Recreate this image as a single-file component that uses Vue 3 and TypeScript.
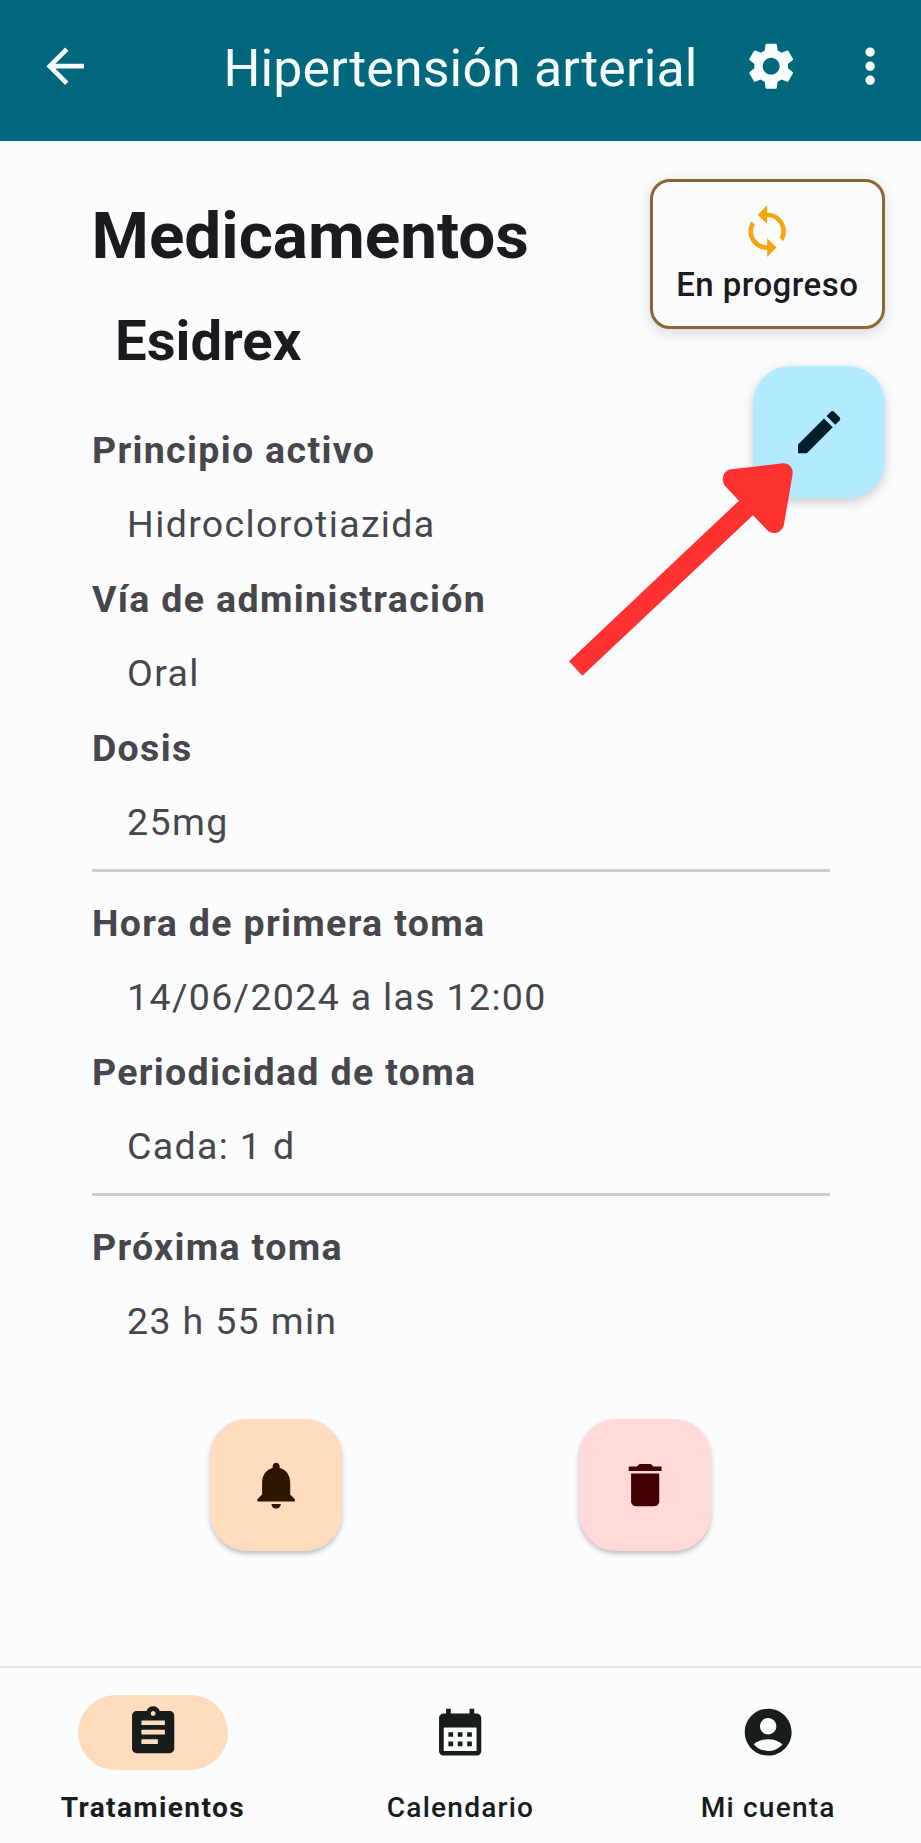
<script setup lang="ts">
interface Field {
  label: string
  value: string
}

interface Tab {
  label: string
  icon: string
  active: boolean
}

const groups: Field[][] = [
  [
    { label: 'Principio activo', value: 'Hidroclorotiazida' },
    { label: 'Vía de administración', value: 'Oral' },
    { label: 'Dosis', value: '25mg' },
  ],
  [
    { label: 'Hora de primera toma', value: '14/06/2024 a las 12:00' },
    { label: 'Periodicidad de toma', value: 'Cada: 1 d' },
  ],
  [{ label: 'Próxima toma', value: '23 h 55 min' }],
]

const icons = {
  back: 'M20 11H7.83l5.59-5.59L12 4l-8 8 8 8 1.41-1.41L7.83 13H20v-2z',
  settings:
    'M19.14 12.94c.04-.3.06-.61.06-.94 0-.32-.02-.64-.07-.94l2.03-1.58c.18-.14.23-.41.12-.61l-1.92-3.32c-.12-.22-.37-.29-.59-.22l-2.39.96c-.5-.38-1.03-.7-1.62-.94l-.36-2.54c-.04-.24-.24-.41-.48-.41h-3.84c-.24 0-.43.17-.47.41l-.36 2.54c-.59.24-1.13.57-1.62.94l-2.39-.96c-.22-.08-.47 0-.59.22L2.74 8.87c-.12.21-.08.47.12.61l2.03 1.58c-.05.3-.09.63-.09.94s.02.64.07.94l-2.03 1.58c-.18.14-.23.41-.12.61l1.92 3.32c.12.22.37.29.59.22l2.39-.96c.5.38 1.03.7 1.62.94l.36 2.54c.05.24.24.41.48.41h3.84c.24 0 .44-.17.47-.41l.36-2.54c.59-.24 1.13-.56 1.62-.94l2.39.96c.22.08.47 0 .59-.22l1.92-3.32c.12-.22.07-.47-.12-.61l-2.01-1.58zM12 15.6c-1.98 0-3.6-1.62-3.6-3.6s1.62-3.6 3.6-3.6 3.6 1.62 3.6 3.6-1.62 3.6-3.6 3.6z',
  more: 'M12 8c1.1 0 2-.9 2-2s-.9-2-2-2-2 .9-2 2 .9 2 2 2zm0 2c-1.1 0-2 .9-2 2s.9 2 2 2 2-.9 2-2-.9-2-2-2zm0 6c-1.1 0-2 .9-2 2s.9 2 2 2 2-.9 2-2-.9-2-2-2z',
  sync: 'M12 4V1L8 5l4 4V6c3.31 0 6 2.69 6 6 0 1.01-.25 1.97-.7 2.8l1.46 1.46C19.54 15.03 20 13.57 20 12c0-4.42-3.58-8-8-8zm0 14c-3.31 0-6-2.69-6-6 0-1.01.25-1.97.7-2.8L5.24 7.74C4.46 8.97 4 10.43 4 12c0 4.42 3.58 8 8 8v3l4-4-4-4v3z',
  edit: 'M3 17.25V21h3.75L17.81 9.94l-3.75-3.75L3 17.25zM20.71 7.04c.39-.39.39-1.02 0-1.41l-2.34-2.34c-.39-.39-1.02-.39-1.41 0l-1.83 1.83 3.75 3.75 1.83-1.83z',
  bell: 'M12 22c1.1 0 2-.9 2-2h-4c0 1.1.89 2 2 2zm6-6v-5c0-3.07-1.64-5.64-4.5-6.32V4c0-.83-.67-1.5-1.5-1.5s-1.5.67-1.5 1.5v.68C7.63 5.36 6 7.92 6 11v5l-2 2v1h16v-1l-2-2z',
  trash: 'M6 19c0 1.1.9 2 2 2h8c1.1 0 2-.9 2-2V7H6v12zM19 4h-3.5l-.71-.71c-.18-.18-.44-.29-.7-.29H9.91c-.26 0-.52.11-.7.29L8.5 4H5v2h14V4z',
}

const tabs: Tab[] = [
  {
    label: 'Tratamientos',
    active: true,
    icon: 'M19 3h-4.18C14.4 1.84 13.3 1 12 1c-1.3 0-2.4.84-2.82 2H5c-1.1 0-2 .9-2 2v14c0 1.1.9 2 2 2h14c1.1 0 2-.9 2-2V5c0-1.1-.9-2-2-2zm-7 0c.55 0 1 .45 1 1s-.45 1-1 1-1-.45-1-1 .45-1 1-1zm2 14H7v-2h7v2zm3-4H7v-2h10v2zm0-4H7V7h10v2z',
  },
  {
    label: 'Calendario',
    active: false,
    icon: 'M19 4h-1V2h-2v2H8V2H6v2H5c-1.11 0-1.99.9-1.99 2L3 20c0 1.1.89 2 2 2h14c1.1 0 2-.9 2-2V6c0-1.1-.9-2-2-2zm0 16H5V10h14v10zM9 14H7v-2h2v2zm4 0h-2v-2h2v2zm4 0h-2v-2h2v2zm-8 4H7v-2h2v2zm4 0h-2v-2h2v2zm4 0h-2v-2h2v2z',
  },
  {
    label: 'Mi cuenta',
    active: false,
    icon: 'M12 2C6.48 2 2 6.48 2 12s4.48 10 10 10 10-4.48 10-10S17.52 2 12 2zm0 4c1.93 0 3.5 1.57 3.5 3.5S13.93 13 12 13s-3.5-1.57-3.5-3.5S10.07 6 12 6zm0 14c-2.03 0-4.43-.82-6.14-2.88C7.55 15.8 9.68 15 12 15s4.45.8 6.14 2.12C16.43 19.18 14.03 20 12 20z',
  },
]
</script>

<template>
  <div class="screen">
    <header class="bar">
      <svg class="icon" viewBox="0 0 24 24"><path :d="icons.back" /></svg>
      <h1 class="title">Hipertensión arterial</h1>
      <div class="actions">
        <svg class="icon" viewBox="0 0 24 24"><path :d="icons.settings" /></svg>
        <svg class="icon" viewBox="0 0 24 24"><path :d="icons.more" /></svg>
      </div>
    </header>

    <main class="body">
      <section class="content">
        <h2 class="heading">Medicamentos</h2>
        <h3 class="name">Esidrex</h3>
        <div v-for="(group, i) in groups" :key="i" class="group">
          <template v-for="field in group" :key="field.label">
            <div class="label">{{ field.label }}</div>
            <div class="value">{{ field.value }}</div>
          </template>
        </div>
        <div class="buttons">
          <button class="fab fab-bell">
            <svg class="icon" viewBox="0 0 24 24"><path :d="icons.bell" /></svg>
          </button>
          <button class="fab fab-trash">
            <svg class="icon" viewBox="0 0 24 24"><path :d="icons.trash" /></svg>
          </button>
        </div>
      </section>

      <aside class="side">
        <div class="status">
          <svg class="icon" viewBox="0 0 24 24"><path :d="icons.sync" /></svg>
          <span class="status-text">En progreso</span>
        </div>
        <button class="fab fab-edit">
          <svg class="icon" viewBox="0 0 24 24"><path :d="icons.edit" /></svg>
        </button>
      </aside>

      <svg class="pointer" viewBox="0 0 900 780">
        <path
          d="M87 664L597 182L556 139C541 121 549 90 575 88L727 70C746 68 760 83 758 102L732 252C729 277 700 288 682 271L639 226L127 707Z"
        />
      </svg>
    </main>

    <nav class="tabs">
      <div v-for="tab in tabs" :key="tab.label" class="tab" :class="{ active: tab.active }">
        <span class="pill">
          <svg class="icon" viewBox="0 0 24 24"><path :d="tab.icon" /></svg>
        </span>
        <span class="tab-label">{{ tab.label }}</span>
      </div>
    </nav>
  </div>
</template>

<style>
body {
  margin: 0;
  background: #fbfcfe;
}
</style>

<style scoped>
.screen {
  display: flex;
  flex-direction: column;
  width: 921px;
  height: 1843px;
  overflow: hidden;
  background: #fbfcfe;
  color: #1b1b1f;
  font-family: Roboto, 'Liberation Sans', sans-serif;
}

.icon {
  display: block;
  flex: none;
  width: 56.3px;
  height: 56.3px;
  fill: currentColor;
}

.bar {
  display: grid;
  grid-template-columns: 1fr auto 1fr;
  align-items: center;
  flex: none;
  box-sizing: border-box;
  height: 141px;
  padding: 0 22.9px 9px 36.9px;
  background: #00677d;
  color: #f8fdff;
}

.title {
  margin: 5px 0 0 -14px;
  font-size: 51.8px;
  font-weight: 400;
  line-height: 66px;
  letter-spacing: 0.17px;
  white-space: nowrap;
}

.actions {
  display: flex;
  justify-content: flex-end;
  gap: 43px;
}

.body {
  position: relative;
  display: grid;
  flex: 1;
}

.content {
  grid-area: 1 / 1;
  padding: 52px 91.5px 0;
}

.heading {
  margin: 0;
  font-size: 65.6px;
  font-weight: 700;
  line-height: 86px;
}

.name {
  margin: 25px 0 35px 23.5px;
  font-size: 56.3px;
  font-weight: 700;
  line-height: 74px;
}

.group + .group {
  margin-top: 9.6px;
  padding-top: 14px;
  border-top: 3px solid #cccdd2;
}

.label,
.value {
  height: 74.4px;
  color: #47464b;
  font-size: 37.5px;
  line-height: 74.4px;
  letter-spacing: 1.34px;
}

.label {
  padding-left: 0.4px;
  font-weight: 700;
}

.value {
  padding-left: 35.6px;
}

.buttons {
  display: flex;
  justify-content: space-around;
  margin-top: 60.5px;
}

.fab {
  display: flex;
  align-items: center;
  justify-content: center;
  width: 132px;
  height: 132px;
  padding: 0;
  border: 0;
  border-radius: 37.5px;
}

.fab-bell {
  background: #ffdcbe;
  color: #2d1600;
  box-shadow: 0 3px 5px rgba(0, 0, 0, 0.24);
}

.fab-trash {
  background: #ffdad8;
  color: #410002;
  box-shadow: 0 3px 5px rgba(0, 0, 0, 0.24);
}

.fab-edit {
  background: #b2ebff;
  color: #001f28;
  box-shadow: 0 4px 12px rgba(0, 0, 0, 0.2);
}

.side {
  grid-area: 1 / 1;
  justify-self: end;
  align-self: start;
  display: flex;
  flex-direction: column;
  align-items: flex-end;
  gap: 37px;
  padding: 38px 36px 0 0;
}

.status {
  display: flex;
  flex-direction: column;
  align-items: center;
  box-sizing: border-box;
  width: 235.5px;
  height: 150px;
  padding-top: 21px;
  border: 3px solid #8b6732;
  border-radius: 20px;
  background: #fbfcfe;
  color: #f5a50f;
  box-shadow: 0 4px 14px rgba(0, 0, 0, 0.15);
}

.status-text {
  margin-top: 2px;
  color: #1b1b1f;
  font-size: 33px;
  font-weight: 500;
  line-height: 47px;
  letter-spacing: 0.45px;
}

.pointer {
  position: absolute;
  left: 540px;
  top: 299px;
  width: 300px;
  height: 260px;
  fill: #ff3131;
}

.tabs {
  display: flex;
  flex: none;
  box-sizing: border-box;
  height: 177px;
  margin-right: -1px;
  margin-left: -1px;
  padding-top: 26.5px;
  border-top: 2px solid #e3e4e6;
}

.tab {
  display: flex;
  flex: 1;
  flex-direction: column;
  align-items: center;
  color: #191c1d;
}

.pill {
  display: flex;
  align-items: center;
  justify-content: center;
  width: 150px;
  height: 75px;
  border-radius: 37.5px;
}

.active .pill {
  background: #ffdcbe;
}

.tab-label {
  margin-top: 19px;
  font-size: 28.1px;
  font-weight: 500;
  line-height: 38px;
  letter-spacing: 1.2px;
}

.active .tab-label {
  font-weight: 700;
  letter-spacing: 1.35px;
}
</style>
